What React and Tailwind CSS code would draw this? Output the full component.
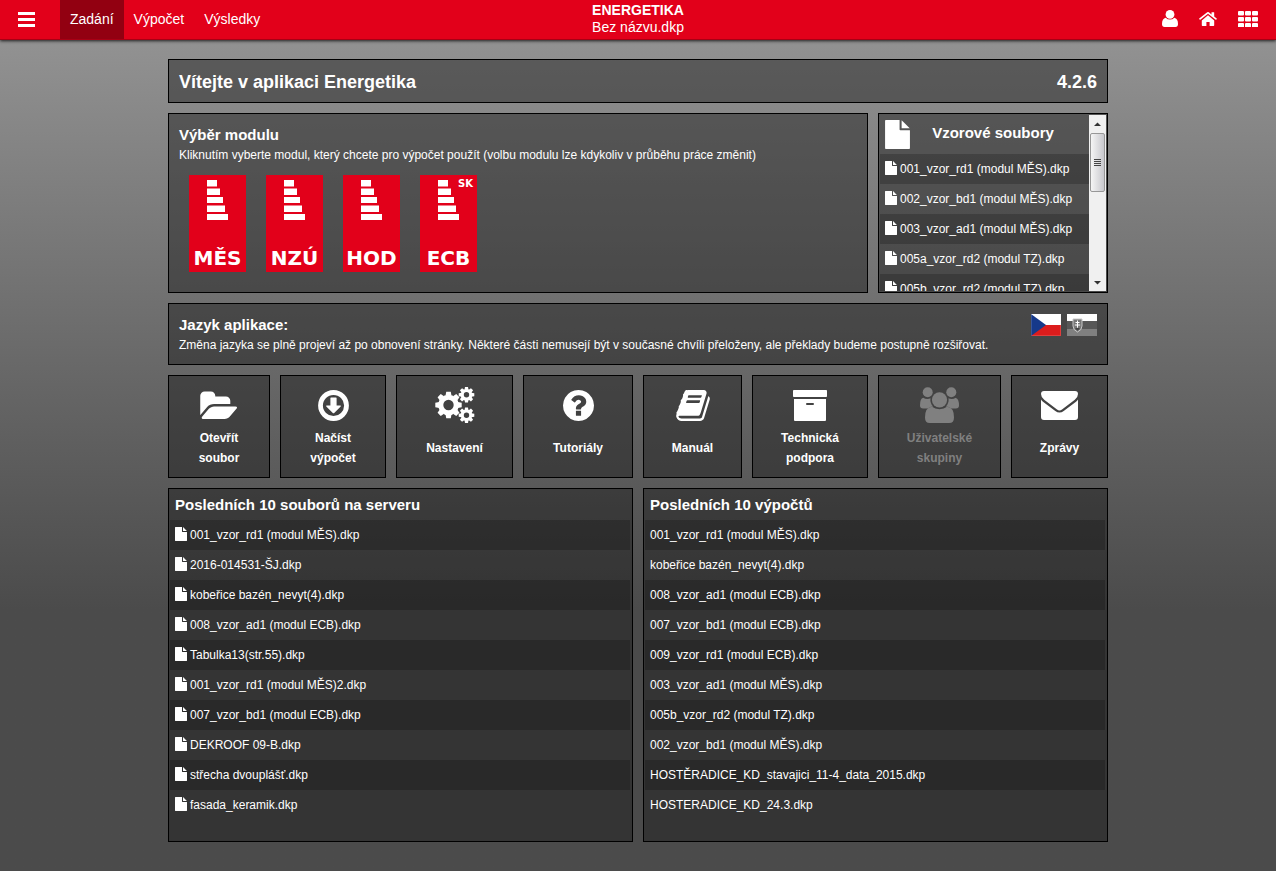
import React from "react";

const modules = [
    { name: "MĚS" },
    { name: "NZÚ" },
    { name: "HOD" },
    { name: "ECB", country: "SK" },
];

const sampleFiles = [
    "001_vzor_rd1 (modul MĚS).dkp",
    "002_vzor_bd1 (modul MĚS).dkp",
    "003_vzor_ad1 (modul MĚS).dkp",
    "005a_vzor_rd2 (modul TZ).dkp",
    "005b_vzor_rd2 (modul TZ).dkp",
];

const serverFiles = [
    "001_vzor_rd1 (modul MĚS).dkp",
    "2016-014531-ŠJ.dkp",
    "kobeřice bazén_nevyt(4).dkp",
    "008_vzor_ad1 (modul ECB).dkp",
    "Tabulka13(str.55).dkp",
    "001_vzor_rd1 (modul MĚS)2.dkp",
    "007_vzor_bd1 (modul ECB).dkp",
    "DEKROOF 09-B.dkp",
    "střecha dvouplášť.dkp",
    "fasada_keramik.dkp",
];

const calculations = [
    "001_vzor_rd1 (modul MĚS).dkp",
    "kobeřice bazén_nevyt(4).dkp",
    "008_vzor_ad1 (modul ECB).dkp",
    "007_vzor_bd1 (modul ECB).dkp",
    "009_vzor_rd1 (modul ECB).dkp",
    "003_vzor_ad1 (modul MĚS).dkp",
    "005b_vzor_rd2 (modul TZ).dkp",
    "002_vzor_bd1 (modul MĚS).dkp",
    "HOSTĚRADICE_KD_stavajici_11-4_data_2015.dkp",
    "HOSTERADICE_KD_24.3.dkp",
];

const FileIcon = ({ className }) => (
    <svg viewBox="0 0 12 14" fill="currentColor" className={className} aria-hidden="true">
        <path d="M0 .4Q0 0 .4 0H7v4.6q0 .4.4.4H12v8.6q0 .4-.4.4H.4Q0 14 0 13.600z" />
        <path d="M8 0.100L11.900 4H8z" />
    </svg>
);

const UserIcon = () => (
    <svg viewBox="0 0 16 17" fill="currentColor" className="w-4 h-[17px]" aria-hidden="true">
        <circle cx="8" cy="4.400" r="4.400" />
        <path d="M3.700 7.700Q5.500 9.600 8 9.600t4.300-1.900Q16 8.500 16 14q0 3-2.600 3H2.600Q0 17 0 14q0-5.500 3.700-6.300z" />
    </svg>
);

const HomeIcon = () => (
    <svg viewBox="0 0 18 14" fill="currentColor" className="w-[18px] h-[14px]" aria-hidden="true">
        <path d="M9 3.300l6.200 5.100v4.900q0 .7-.7.7h-3.900v-4H7.400v4H3.500q-.7 0-.7-.7V8.400z" />
        <path d="M17.800 7l-.6.700q-.2.200-.5 0L9 1.700 1.300 7.700q-.3.200-.5 0L.2 7q-.2-.3 0-.5l8-6.200q.8-.6 1.600 0L12.500 2.400V.5q0-.3.300-.3h2.100q.3 0 .3.300v4l2.500 2q.3.200.1.500z" />
    </svg>
);

const GridIcon = () => (
    <svg viewBox="0 0 20 16" fill="currentColor" className="w-5 h-4" aria-hidden="true">
        {[0, 6, 12].map(y =>
            [0, 7, 14].map(x => <rect key={x + "-" + y} x={x} y={y} width="6" height="4.500" rx="1" />)
        )}
    </svg>
);

const FolderIcon = () => (
    <svg viewBox="0 128 2045 1440" fill="currentColor" className="w-10 h-[29px]" aria-hidden="true">
        <path d="M1943 952q0 31-31 66l-336 396q-43 51-120.500 86.500t-143.500 35.500h-1088q-34 0-60.500-13t-26.500-43q0-31 31-66l336-396q43-51 120.500-86.500t143.500-35.500h1088q34 0 60.500 13t26.500 43zm-343-344v160h-832q-94 0-197 47.500t-164 119.500l-337 396-5 6q0-4-.5-12.500t-.5-12.500v-960q0-92 66-158t158-66h320q92 0 158 66t66 158v32h544q92 0 158 66t66 158z" />
    </svg>
);

const DownloadIcon = () => (
    <svg viewBox="0 0 31 31" fill="currentColor" className="size-[31px]" aria-hidden="true">
        <circle cx="15.500" cy="15.500" r="13" fill="none" stroke="currentColor" strokeWidth="4.800" />
        <path d="M13 7.500h5q.6 0 .6.600v7.400h3.700q1 0 .4.900l-6.500 6.600q-.7.700-1.400 0l-6.500-6.600q-.6-.9.400-.9h3.700V8.100q0-.6.600-.6z" />
    </svg>
);

const Gear = ({ x, y, r, hole, tooth, reach }) => (
    <g transform={`translate(${x} ${y})`}>
        <circle r={(r + hole) / 2} fill="none" stroke="currentColor" strokeWidth={r - hole} />
        {[0, 45, 90, 135, 180, 225, 270, 315].map(angle => (
            <path
                key={angle}
                transform={`rotate(${angle})`}
                d={`M${-tooth} ${-r + 1}L${-tooth * 0.75} ${-reach}H${tooth * 0.75}L${tooth} ${-r + 1}z`}
            />
        ))}
    </g>
);

const SettingsIcon = () => (
    <svg viewBox="0 0 40 36" fill="currentColor" className="w-10 h-9" aria-hidden="true">
        <Gear x={13.5} y={18} r={10.3} hole={5.2} tooth={3} reach={13.2} />
        <Gear x={31.5} y={7.8} r={5.8} hole={2.7} tooth={2} reach={7.8} />
        <Gear x={31.5} y={28.2} r={5.8} hole={2.7} tooth={2} reach={7.8} />
    </svg>
);

const HelpIcon = () => (
    <svg viewBox="128 128 1536 1536" fill="currentColor" className="size-[31px]" aria-hidden="true">
        <path d="M1024 1376v-192q0-14-9-23t-23-9h-192q-14 0-23 9t-9 23v192q0 14 9 23t23 9h192q14 0 23-9t9-23zm256-672q0-88-55.500-163t-138.500-116-170-41q-243 0-371 213-15 24 8 42l132 100q7 6 19 6 16 0 25-12 53-68 86-92 34-24 86-24 48 0 85.500 26t37.500 59q0 38-20 61t-68 45q-63 28-115.500 86.500t-52.500 125.500v36q0 14 9 23t23 9h192q14 0 23-9t9-23q0-19 21.500-49.500t54.500-49.500q32-18 49-28.500t46-35 44.500-48 28-60.500 12.500-81zm384 192q0 209-103 385.500t-279.500 279.500-385.500 103-385.500-103-279.500-279.500-103-385.500 103-385.500 279.500-279.500 385.500-103 385.500 103 279.500 279.500 103 385.500z" />
    </svg>
);

const BookIcon = () => (
    <svg viewBox="64 128 1664 1536" fill="currentColor" className="w-[34px] h-[31px]" aria-hidden="true">
        <path d="M1703 478q40 57 18 129l-275 906q-19 64-76.500 107.500t-122.500 43.500h-923q-77 0-148.500-53.500t-99.500-131.500q-24-67-2-127 0-4 3-27t4-37q1-8-3-21.500t-3-19.500q2-11 8-21t16.500-23.500 16.500-23.500q23-38 45-91.500t30-91.500q3-10 .5-30t-.5-28q3-11 17-28t17-23q21-36 42-92t25-90q1-9-2.500-32t.5-28q4-13 22-30.500t22-22.500q19-26 42.500-84.500t27.500-96.500q1-8-3-25.500t-2-26.500q2-8 9-18t18-23 17-21q8-12 16.500-30.500t15-35 16-36 19.500-32 26.500-23.500 36-11.500 47.500 5.500l-1 3q38-9 51-9h761q74 0 114 56t18 130l-274 906q-36 119-71.500 153.500t-128.500 34.500h-869q-27 0-38 15-11 16-1 43 24 70 144 70h923q29 0 56-15.500t35-41.500l300-987q7-22 5-57 38 15 59 43zm-1064 2q-4 13 2 22.500t20 9.500h608q13 0 25.500-9.500t16.500-22.500l21-64q4-13-2-22.500t-20-9.500h-608q-13 0-25.500 9.500t-16.500 22.500zm-83 256q-4 13 2 22.500t20 9.500h608q13 0 25.500-9.500t16.500-22.500l21-64q4-13-2-22.500t-20-9.500h-608q-13 0-25.500 9.500t-16.500 22.500z" />
    </svg>
);

const ArchiveIcon = () => (
    <svg viewBox="0 0 34 31" fill="currentColor" className="w-[34px] h-[31px]" aria-hidden="true">
        <rect width="34" height="7" rx="0.800" />
        <path fillRule="evenodd" d="M1 9h32v21q0 1-1 1H2q-1 0-1-1zM14 13q-1 0-1 1t1 1h6q1 0 1-1t-1-1z" />
    </svg>
);

const GroupIcon = () => (
    <svg viewBox="0 0 39 36" fill="currentColor" className="w-[39px] h-9" aria-hidden="true">
        <circle cx="7.700" cy="5.200" r="5" />
        <circle cx="31.300" cy="5.200" r="5" />
        <path d="M3.200 10.800Q5 12 7.500 12q1.600 0 3-.7-.3 2 .1 3.700.8 3 2.600 4.600-3.200.1-5.400 2H3.200Q0 21.500 0 18.500q0-7 3.200-7.700z" />
        <path d="M35.800 10.800Q34 12 31.500 12q-1.600 0-3-.7.3 2-.1 3.700-.8 3-2.600 4.600 3.200.1 5.400 2h4.600q3.200 0 3.200-3 0-7-3.200-7.700z" />
        <circle cx="19.500" cy="12.800" r="7.600" />
        <path d="M12 19.800q3 2.400 7.500 2.400t7.500-2.400q7 .5 7 10.700 0 5.500-4.800 5.500H9.800Q5 36 5 30.500q0-10.200 7-10.700z" />
    </svg>
);

const MailIcon = () => (
    <svg viewBox="0 0 37 29" fill="currentColor" className="w-[37px] h-[29px]" aria-hidden="true">
        <path d="M3 0h31q3 0 3 3 0 3.200-3.200 5.800L21 18.400q-2.500 2-5 0L3.200 8.800Q0 6.200 0 3q0-3 3-3z" />
        <path d="M0 8.500q.8 1.300 2 2.300l12.300 9.200q4.200 3.200 8.400 0L35 10.800q1.200-1 2-2.300V26q0 3-3 3H3q-3 0-3-3z" />
    </svg>
);

const actions = [
    { lines: ["Otevřít", "soubor"], Icon: FolderIcon },
    { lines: ["Načíst", "výpočet"], Icon: DownloadIcon },
    { lines: ["Nastavení"], Icon: SettingsIcon },
    { lines: ["Tutoriály"], Icon: HelpIcon },
    { lines: ["Manuál"], Icon: BookIcon },
    { lines: ["Technická", "podpora"], Icon: ArchiveIcon },
    { lines: ["Uživatelské", "skupiny"], Icon: GroupIcon, disabled: true },
    { lines: ["Zprávy"], Icon: MailIcon },
];

const Header = () => (
    <header className="relative grid grid-cols-[1fr_auto_1fr] h-10 bg-[#e2001a] border-b border-[#a80014] shadow-[0_1px_3px_rgba(0,0,0,0.8)] text-sm">
        <nav className="flex">
            <button aria-label="Menu" className="flex flex-col justify-center gap-[3px] w-[60px] pl-[18px]">
                <span className="w-[17px] h-[3px] bg-white" />
                <span className="w-[17px] h-[3px] bg-white" />
                <span className="w-[17px] h-[3px] bg-white" />
            </button>
            <a href="#zadani" className="flex items-center px-[10px] pb-px bg-[#920011]">Zadání</a>
            <a href="#vypocet" className="flex items-center px-[10px] pb-px">Výpočet</a>
            <a href="#vysledky" className="flex items-center px-[10px] pb-px">Výsledky</a>
        </nav>
        <div className="pt-[2px] text-center leading-[17px]">
            <h1 className="font-bold">ENERGETIKA</h1>
            <p>Bez názvu.dkp</p>
        </div>
        <div className="flex items-center justify-end gap-[21px] pr-[18px] pb-[2px]">
            <button aria-label="Uživatel"><UserIcon /></button>
            <button aria-label="Domů"><HomeIcon /></button>
            <button aria-label="Aplikace"><GridIcon /></button>
        </div>
    </header>
);

const ModuleButton = ({ name, country }) => (
    <button className="relative flex flex-col items-center justify-between w-[57px] h-[97px] pt-[5px] bg-[#e2001a] font-['DejaVu_Sans',sans-serif] font-bold">
        <svg viewBox="0 0 21 40" fill="currentColor" className="w-[21px] h-10" aria-hidden="true">
            <rect x="0" y="0" width="10" height="6.500" />
            <rect x="0" y="8.500" width="13" height="6.500" />
            <rect x="0" y="17" width="16" height="6" />
            <rect x="0" y="25.500" width="18" height="6.500" />
            <rect x="0" y="34" width="21" height="6" />
        </svg>
        {country && <span className="absolute top-[3px] right-1 text-[10px] leading-3">{country}</span>}
        <span className="text-xl leading-7">{name}</span>
    </button>
);

const FileList = ({ files, withIcon }) => (
    <ul>
        {files.map(file => (
            <li key={file} className="odd:bg-black/20">
                <a href="#soubor" className="flex items-center gap-[3px] h-[30px] pl-[5px] whitespace-nowrap">
                    {withIcon && <FileIcon className="w-3 h-[14px] shrink-0 mb-[2px]" />}
                    {file}
                </a>
            </li>
        ))}
    </ul>
);

const ScrollBar = () => (
    <div className="flex flex-col w-[17px] shrink-0 bg-[#f0f0f0]">
        <svg viewBox="0 0 17 18" className="w-[17px] h-[18px]" aria-hidden="true">
            <path d="M5 11L8.500 7.500 12 11z" fill="#333" />
        </svg>
        <div className="flex flex-col items-center justify-center gap-px h-[59px] mx-px rounded-xs border border-[#979797] bg-linear-to-r from-[#f5f5f5] to-[#c8c8cd]">
            <span className="w-[7px] h-px bg-[#444]" />
            <span className="w-[7px] h-px bg-[#444]" />
            <span className="w-[7px] h-px bg-[#444]" />
            <span className="w-[7px] h-px bg-[#444]" />
        </div>
        <svg viewBox="0 0 17 18" className="w-[17px] h-[18px] mt-auto" aria-hidden="true">
            <path d="M5 8L8.500 11.500 12 8z" fill="#333" />
        </svg>
    </div>
);

const CzechFlag = () => (
    <svg viewBox="0 0 30 22" className="w-[30px] h-[22px]" aria-hidden="true">
        <rect width="30" height="11" fill="#fff" />
        <rect y="11" width="30" height="11" fill="#dc1c1c" />
        <path d="M0 0L15 11 0 22z" fill="#16398a" />
        <rect x="0.500" y="0.500" width="29" height="21" fill="none" stroke="#fff" strokeOpacity="0.150" />
    </svg>
);

const SlovakFlag = () => (
    <svg viewBox="0 0 30 22" className="w-[30px] h-[22px]" aria-hidden="true">
        <rect width="30" height="7" fill="#fff" />
        <rect y="7" width="30" height="8" fill="#575757" />
        <rect y="15" width="30" height="7" fill="#808080" />
        <path d="M6 5h9v7q0 4-4.500 6Q6 16 6 12z" fill="#777" stroke="#c8c8c8" />
        <path d="M10.500 6.500v8M8.500 8.500h4M7.800 11h5.400" stroke="#fff" fill="none" />
        <path d="M8 14.500q2.500-1.500 5 0l-2.500 2.300z" fill="#444" />
    </svg>
);

const panel = "border border-black bg-[#181818]/45";

const App = () => {
    return (
        <div className="min-h-screen bg-linear-to-b from-[#979797] to-[#4b4b4b] to-[610px] font-['Liberation_Sans',Arial,sans-serif] text-xs text-white">
            <Header />
            <main className="flex flex-col gap-[10px] max-w-[940px] mx-auto pt-[19px] pb-[29px]">
                <section className={`${panel} flex items-center justify-between h-11 px-[10px] pt-[2px] text-lg font-bold`}>
                    <h2>Vítejte v aplikaci Energetika</h2>
                    <span>4.2.6</span>
                </section>

                <div className="grid grid-cols-[1fr_230px] gap-[10px] h-[180px]">
                    <section className={`${panel} px-[10px] pt-[10px]`}>
                        <h3 className="text-[15px] leading-[21px] font-bold">Výběr modulu</h3>
                        <p className="leading-5">
                            Kliknutím vyberte modul, který chcete pro výpočet použít (volbu modulu lze kdykoliv v průběhu práce změnit)
                        </p>
                        <div className="flex gap-5 pt-[10px] pl-[10px]">
                            {modules.map(m => <ModuleButton key={m.name} name={m.name} country={m.country} />)}
                        </div>
                    </section>
                    <section className={`${panel} flex p-px min-h-0`}>
                        <div className="flex-1 overflow-hidden">
                            <div className="flex items-start h-[39px] px-[5px] pt-[5px]">
                                <FileIcon className="w-[25px] h-[29px]" />
                                <h3 className="flex-1 pt-[3px] pr-2 text-center text-[15px] leading-5 font-bold">Vzorové soubory</h3>
                            </div>
                            <FileList files={sampleFiles} withIcon />
                        </div>
                        <ScrollBar />
                    </section>
                </div>

                <section className={`${panel} flex justify-between h-[62px] p-[10px]`}>
                    <div>
                        <h3 className="text-[15px] leading-[21px] font-bold">Jazyk aplikace:</h3>
                        <p className="leading-5">
                            Změna jazyka se plně projeví až po obnovení stránky. Některé části nemusejí být v současné chvíli přeloženy, ale překlady budeme postupně rozšiřovat.
                        </p>
                    </div>
                    <div className="flex items-start gap-[6px]">
                        <button aria-label="Čeština"><CzechFlag /></button>
                        <button aria-label="Slovenčina"><SlovakFlag /></button>
                    </div>
                </section>

                <div className="grid grid-cols-[102fr_106fr_117fr_110fr_99fr_116fr_123fr_97fr] gap-[10px]">
                    {actions.map(({ lines, Icon, disabled }) => (
                        <button
                            key={lines[0]}
                            disabled={disabled}
                            className={`${panel} flex flex-col items-center h-[103px] pt-[9px] font-bold disabled:text-[#808080]`}
                        >
                            <span className="flex items-center h-10">
                                <Icon />
                            </span>
                            <span className="flex flex-col justify-center h-[46px] leading-5">
                                {lines.map(line => <span key={line}>{line}</span>)}
                            </span>
                        </button>
                    ))}
                </div>

                <div className="grid grid-cols-2 gap-[10px]">
                    <section className={`${panel} h-[354px] p-px pr-[2px]`}>
                        <h3 className="h-[30px] pl-[5px] text-[15px] leading-[30px] font-bold">Posledních 10 souborů na serveru</h3>
                        <FileList files={serverFiles} withIcon />
                    </section>
                    <section className={`${panel} h-[354px] p-px pr-[2px]`}>
                        <h3 className="h-[30px] pl-[5px] text-[15px] leading-[30px] font-bold">Posledních 10 výpočtů</h3>
                        <FileList files={calculations} />
                    </section>
                </div>
            </main>
        </div>
    );
};

export default App;
